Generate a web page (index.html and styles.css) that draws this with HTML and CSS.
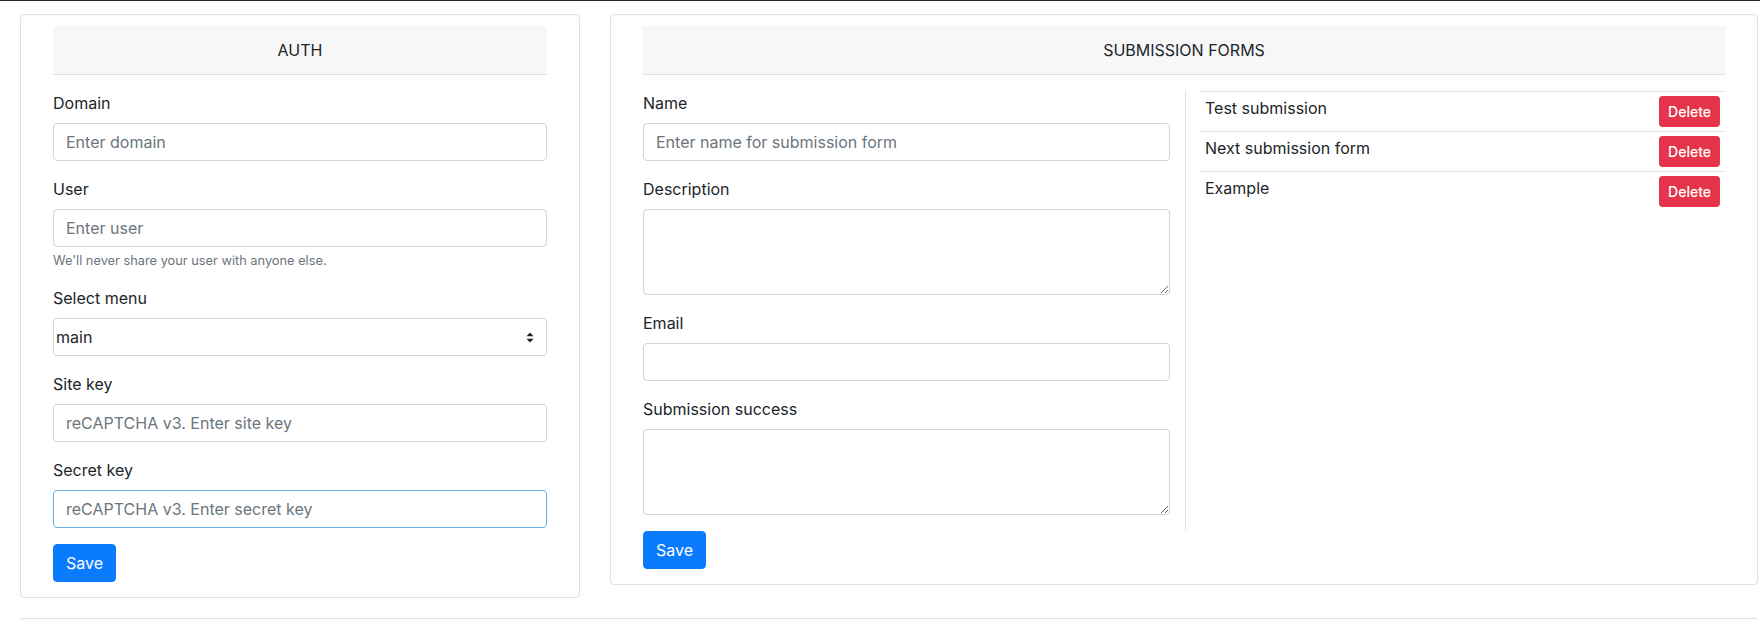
FILE: index.html
```html
<!DOCTYPE html>
<html lang="en">
<head>
<meta charset="utf-8">
<title>Settings</title>
<link rel="stylesheet" href="styles.css">
</head>
<body>
<div class="topbar"></div>
<main class="page">
  <div class="row">
    <section class="card">
      <div class="card-header">AUTH</div>
      <form class="form">
        <div class="form-group">
          <label class="label">Domain</label>
          <input class="form-control" type="text" placeholder="Enter domain">
        </div>
        <div class="form-group">
          <label class="label">User</label>
          <input class="form-control" type="text" placeholder="Enter user">
          <small class="help">We'll never share your user with anyone else.</small>
        </div>
        <div class="form-group">
          <label class="label">Select menu</label>
          <div class="select">
            <span class="select-value">main</span>
            <svg class="select-arrows" width="8" height="11" viewBox="0 0 8 11"><path d="M4 0.5 L7.5 4.3 L0.5 4.3 Z M4 10.5 L7.5 6.7 L0.5 6.7 Z" fill="#222"/></svg>
          </div>
        </div>
        <div class="form-group">
          <label class="label">Site key</label>
          <input class="form-control" type="text" placeholder="reCAPTCHA v3. Enter site key">
        </div>
        <div class="form-group">
          <label class="label">Secret key</label>
          <input class="form-control is-focused" type="text" placeholder="reCAPTCHA v3. Enter secret key">
        </div>
        <button type="button" class="btn btn-primary">Save</button>
      </form>
    </section>

    <section class="card">
      <div class="card-header">SUBMISSION FORMS</div>
      <div class="split">
        <div class="split-form">
          <div class="form-group">
            <label class="label">Name</label>
            <input class="form-control" type="text" placeholder="Enter name for submission form">
          </div>
          <div class="form-group">
            <label class="label">Description</label>
            <textarea class="form-control textarea" rows="3"></textarea>
          </div>
          <div class="form-group">
            <label class="label">Email</label>
            <input class="form-control" type="text">
          </div>
          <div class="form-group">
            <label class="label">Submission success</label>
            <textarea class="form-control textarea" rows="3"></textarea>
          </div>
        </div>
        <div class="split-list">
          <table class="table">
            <tbody>
              <tr><td>Test submission</td><td class="cell-action"><button type="button" class="btn btn-sm btn-danger">Delete</button></td></tr>
              <tr><td>Next submission form</td><td class="cell-action"><button type="button" class="btn btn-sm btn-danger">Delete</button></td></tr>
              <tr><td>Example</td><td class="cell-action"><button type="button" class="btn btn-sm btn-danger">Delete</button></td></tr>
            </tbody>
          </table>
        </div>
      </div>
      <button type="button" class="btn btn-primary">Save</button>
    </section>
  </div>
  <section class="card card-next"></section>
</main>
</body>
</html>
```
FILE: styles.css
```css
* { box-sizing: border-box; }

html, body {
  margin: 0;
  padding: 0;
  background: #fff;
}

body {
  font-family: Inter, Roboto, "Liberation Sans", Arial, sans-serif;
  font-size: 16px;
  line-height: 1.5;
  color: #212529;
  overflow: hidden;
}

.topbar {
  height: 1px;
  background: #23272b;
}

.page {
  padding: 13px 2px 0 20px;
}

.row {
  display: grid;
  grid-template-columns: 560px 1148px;
  column-gap: 30px;
  align-items: start;
  margin-bottom: 20px;
}

.card {
  border: 1px solid #dfdfdf;
  border-radius: 4px;
  background: #fff;
  padding: 11px 32px 15px 32px;
}

.card-next {
  height: 2px;
  padding: 0;
  border-bottom: 0;
  border-radius: 4px 4px 0 0;
}

.card-header {
  background: #f7f7f7;
  border-bottom: 1px solid #dfdfdf;
  padding: 12px 20px;
  text-align: center;
  margin-bottom: 16px;
}

.form-group {
  margin-bottom: 16px;
}

.label {
  display: inline-block;
  margin-bottom: 8px;
}

.form-control {
  display: block;
  width: 100%;
  height: 38px;
  padding: 6px 12px;
  font-family: inherit;
  font-size: 16px;
  line-height: 1.5;
  color: #495057;
  background: #fff;
  border: 1px solid #ced4da;
  border-radius: 4px;
  outline: none;
  margin: 0;
}

.form-control::placeholder {
  color: #6c757d;
  opacity: 1;
}

.form-control.is-focused {
  border-color: #6aaee4;
}

.textarea {
  height: 86px;
  resize: vertical;
}

.help {
  display: block;
  margin-top: 4px;
  font-size: 12.8px;
  line-height: 1.5;
  color: #6c757d;
}

.select {
  display: flex;
  align-items: center;
  justify-content: space-between;
  height: 38px;
  padding: 0 12px 0 2px;
  border: 1px solid #ced4da;
  border-radius: 4px;
  background: #fff;
  color: #212529;
}

.select-arrows {
  display: block;
}

.btn {
  display: inline-block;
  font-family: inherit;
  font-size: 16px;
  line-height: 1.5;
  padding: 6px 12px;
  border: 1px solid transparent;
  border-radius: 4px;
  color: #fff;
  cursor: pointer;
}

.btn-primary {
  background: #0a7bff;
  border-color: #0a7bff;
}

.btn-danger {
  background: #e5354b;
  border-color: #e5354b;
  font-weight: 500;
}

.btn-sm {
  font-size: 14px;
  padding: 4px 8px;
  border-radius: 3.2px;
}

.split {
  display: grid;
  grid-template-columns: 543px 1fr;
}

.split-form {
  padding-right: 15px;
  border-right: 1px solid #e2e2e2;
}

.split-list {
  padding-left: 14px;
  padding-right: 0;
}

.table {
  width: 100%;
  border-collapse: collapse;
}

.table td {
  border-top: 1px solid #dee2e6;
  padding: 4px 5px;
  vertical-align: top;
}

.cell-action {
  text-align: right;
  width: 1%;
  white-space: nowrap;
}
```
